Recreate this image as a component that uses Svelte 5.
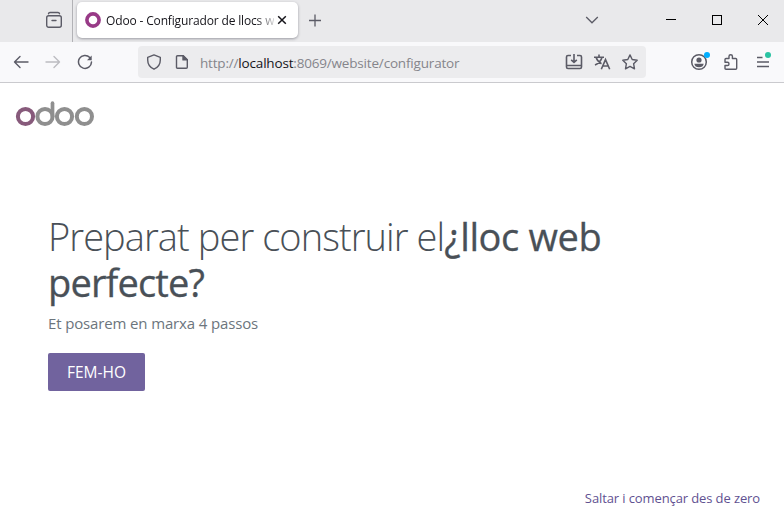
<script>
  const controls = ['minimise', 'maximise', 'close'];
</script>

<div class="window">
  <header class="tabs">
    <div class="recent">
      <svg width="18" height="18" viewBox="0 0 18 18" fill="none" stroke="#5b5b66" stroke-width="1.4" stroke-linecap="round" stroke-linejoin="round">
        <path d="M3.5 2.700Q3.700 1.500 5 1.500h8q1.300 0 1.500 1.200" />
        <rect x="1.700" y="4.700" width="14.600" height="11.600" rx="2" /><path d="M7 9.500h4" />
      </svg>
    </div>
    <div class="tab">
      <svg class="favicon" width="16" height="16" viewBox="0 0 16 16"><circle cx="8" cy="8" r="6.100" fill="none" stroke="#983a87" stroke-width="3.600" /></svg>
      <span class="clip"><span class="title">Odoo - Configurador de llocs w</span></span>
      <svg class="x" width="10" height="10" viewBox="0 0 10 10" stroke="#15141a" stroke-width="1.500"><path d="M1.200 1.200l7.600 7.600M8.800 1.200L1.200 8.800" /></svg>
    </div>
    <svg class="plus" width="14" height="14" viewBox="0 0 14 14" stroke="#5b5b66" stroke-width="1.300"><path d="M1 7.500h12M7 1.500v12" /></svg>
    <svg class="chevron" width="14" height="10" viewBox="0 0 14 10" fill="none" stroke="#5b5b66" stroke-width="1.300"><path d="M1.200 2L7 7.800 12.800 2" /></svg>
    <div class="controls">
      {#each controls as kind}
        <svg width="12" height="12" viewBox="0 0 12 12" fill="none" stroke="#000" stroke-width="1">
          {#if kind === 'minimise'}<path d="M1 5.500h10" />
          {:else if kind === 'maximise'}<rect x="1.500" y="1.500" width="9" height="9" />
          {:else}<path d="M1 1l10 10M11 1L1 11" />{/if}
        </svg>
      {/each}
    </div>
  </header>

  <nav class="toolbar">
    <div class="history">
      <svg width="16" height="16" viewBox="0 0 16 16" fill="none" stroke="#5b5b66" stroke-width="1.400" stroke-linecap="round" stroke-linejoin="round"><path d="M15 8H1.500M7 2.500L1.500 8 7 13.500" /></svg>
      <svg width="16" height="16" viewBox="0 0 16 16" fill="none" stroke="#bcbcc1" stroke-width="1.400" stroke-linecap="round" stroke-linejoin="round"><path d="M1 8h13.500M9 2.500L14.500 8 9 13.500" /></svg>
      <svg width="16" height="16" viewBox="0 0 16 16" fill="none" stroke="#5b5b66" stroke-width="1.500" stroke-linecap="round"><path d="M12.800 3.500A6.500 6.500 0 1 0 14.500 8" /><path d="M14.700 1.500v4.700H10z" fill="#5b5b66" stroke="none" /></svg>
    </div>
    <div class="address">
      <svg width="16" height="16" viewBox="0 0 16 16" fill="none" stroke="#5b5b66" stroke-width="1.400" stroke-linejoin="round"><path d="M8 .9L14.300 3.300V6c0 4.300-2.300 7.400-6.300 9.200C4 13.400 1.700 10.300 1.700 6V3.300z" /></svg>
      <svg class="page" width="16" height="16" viewBox="0 0 16 16" fill="none" stroke="#5b5b66" stroke-width="1.400" stroke-linejoin="round"><path d="M3.500 1.700h5.800l4 4v7.600q0 1-1 1H3.500q-1 0-1-1V2.700q0-1 1-1z" /><path d="M9 1.700v4.200h4.300z" fill="#5b5b66" /></svg>
      <span class="url">http://<b>localhost</b>:8069/website/configurator</span>
      <div class="actions">
        <svg width="18" height="16" viewBox="0 0 18 16" fill="none" stroke="#5b5b66" stroke-width="1.600" stroke-linejoin="round"><path d="M6 1.500H3q-1.500 0-1.500 1.500v10q0 1.500 1.500 1.500h12q1.500 0 1.500-1.500V3q0-1.500-1.500-1.500h-3M1.500 11.500h15M9 0v8M6.200 5.800L9 8.500l2.800-2.700" /></svg>
        <svg width="18" height="16" viewBox="0 0 18 16" fill="none" stroke="#5b5b66" stroke-width="1.600"><path d="M1 3.200h10M6 .5v2.700M9 3.200C8.200 6.500 5.300 9.500 2 11M3 3.200c1 3 2.800 5 5.500 6.500M8.300 15.200L12.500 5.600l4.200 9.600M9.700 12h5.600" /></svg>
        <svg width="18" height="16" viewBox="0 0 18 16" fill="none" stroke="#5b5b66" stroke-width="1.400" stroke-linejoin="round"><path d="M9 .9l2.200 4.600 5 .7-3.600 3.500.9 5.100L9 12.400l-4.500 2.400.9-5.100L1.800 6.200l5-.7z" /></svg>
      </div>
    </div>
    <div class="extras">
      <span class="item"><svg width="18" height="18" viewBox="0 0 18 18"><circle cx="9" cy="9" r="7.300" fill="none" stroke="#5b5b66" stroke-width="1.500" /><circle cx="9" cy="7" r="2.600" fill="#5b5b66" /><path d="M4.300 10.700h9.400q-.6 3.500-4.700 3.500t-4.700-3.500z" fill="#5b5b66" /></svg><i class="dot blue"></i></span>
      <span class="item"><svg width="18" height="18" viewBox="0 0 18 18" fill="none" stroke="#5b5b66" stroke-width="1.400" stroke-linejoin="round"><path d="M3 6.500q0-1 1-1h3V3.300q0-1.600 1.700-1.600t1.700 1.600v2.200h3.300q1 0 1 1v8.800q0 1-1 1H4q-1 0-1-1v-2.800h2.500q1.500 0 1.500-1.600t-1.500-1.600H3z" /></svg></span>
      <span class="item"><svg width="18" height="18" viewBox="0 0 18 18" stroke="#5b5b66" stroke-width="1.300"><path d="M3 4.500h5.500M3 9h12M3 13.500h12" /></svg><i class="dot green"></i></span>
    </div>
  </nav>

  <main>
    <svg class="logo" role="img" aria-label="odoo" width="80" height="28" viewBox="0 0 80 28" fill="none" stroke="#8f8f8f" stroke-width="4">
      <circle cx="10.500" cy="16.500" r="7.600" stroke="#875a7b" />
      <circle cx="30" cy="16.500" r="7.600" /><path d="M37.500 16.500V3.200" stroke-linecap="round" stroke-width="3.700" />
      <circle cx="49.500" cy="16.500" r="7.600" /><circle cx="69.400" cy="16.500" r="7.600" />
    </svg>
    <section>
      <h1><span class="line"><span class="light">Preparat per construir el</span><strong>¿lloc web</strong></span> <span class="line"><strong class="second">perfecte?</strong></span></h1>
      <p>Et posarem en marxa 4 passos</p>
      <button><span>FEM-HO</span></button>
    </section>
    <a href="#skip">Saltar i començar des de zero</a>
  </main>
</div>

<style>
  :global(body) { margin: 0; background: #fff; }
  .window { width: 784px; height: 525px; display: flex; flex-direction: column; overflow: hidden; font-family: "Open Sans", "Noto Sans", sans-serif; }
  svg { display: block; flex: none; }
  .tabs { height: 42px; flex: none; background: #e9e9eb; display: flex; align-items: center; box-sizing: border-box; padding-bottom: 2px; }
  .recent { width: 73px; height: 42px; margin-bottom: -2px; border-right: 1px solid #b2b2b6; display: flex; align-items: center; justify-content: flex-end; padding: 0 9px 2px 0; box-sizing: border-box; }
  .tab { margin-left: 4px; width: 221px; height: 36px; border-radius: 5px; background: #fff; box-shadow: 0 1px 3px #9a9aa1; display: flex; align-items: center; box-sizing: border-box; padding-left: 8px; }
  .clip { width: 168px; margin-left: 5px; white-space: nowrap; font-size: 12px; color: #15141a; line-height: 20px; mask-image: linear-gradient(to right, #000 150px, transparent 172px); position: relative; top: 1px; }
  .title { letter-spacing: -0.150px; }
  .x { margin-left: 3px; }
  .plus { margin-left: 10px; }
  .chevron { margin-left: 263px; }
  .controls { display: flex; gap: 34px; margin-left: 66px; }
  .toolbar { height: 41px; flex: none; box-sizing: border-box; background: #f9f9fb; border-bottom: 1px solid #cacace; display: flex; align-items: center; }
  .history { display: flex; gap: 16px; padding-left: 13px; }
  .address { width: 508px; height: 32px; margin-left: 45px; background: #ececee; border-radius: 4px; display: flex; align-items: center; box-sizing: border-box; padding: 0 7px 0 8px; }
  .page { margin-left: 12px; }
  .url { margin-left: 10px; padding-top: 2px; font-size: 13.500px; letter-spacing: -0.180px; color: #85858b; white-space: nowrap; line-height: 20px; }
  .url b { color: #15141a; font-weight: 400; }
  .actions { display: flex; gap: 10px; margin-left: auto; }
  .extras { display: flex; gap: 14px; margin-left: 44px; }
  .item { position: relative; }
  .dot { position: absolute; width: 6px; height: 6px; border-radius: 50%; top: -1px; right: -2px; }
  .blue { background: #00aeff; }
  .green { background: #2ac3a2; right: 1px; }
  main { flex: 1; display: flex; flex-direction: column; background: #fff; }
  .logo { margin: 17px 0 0 15px; }
  section { padding: 85px 0 0 48px; }
  h1 { margin: 0; font-size: 38px; line-height: 46px; font-weight: 300; color: #495057; white-space: nowrap; }
  .line { display: block; }
  .light { letter-spacing: -0.930px; }
  strong { font-weight: 500; letter-spacing: -0.380px; -webkit-text-stroke: 0.300px #495057; }
  .second { letter-spacing: -0.850px; }
  p { margin: 6px 0 0; font-size: 15px; line-height: 24px; letter-spacing: -0.140px; color: #6c757d; }
  button { margin-top: 18px; width: 97px; height: 38px; padding: 0; border: 0; border-radius: 2px; background: #71639e; color: #fff; font: 400 15.500px/38px "Open Sans", sans-serif; display: block; }
  a { margin: auto 24px 17px auto; color: #5f5191; font-size: 13px; line-height: 20px; letter-spacing: -0.110px; text-decoration: none; white-space: nowrap; }
</style>
